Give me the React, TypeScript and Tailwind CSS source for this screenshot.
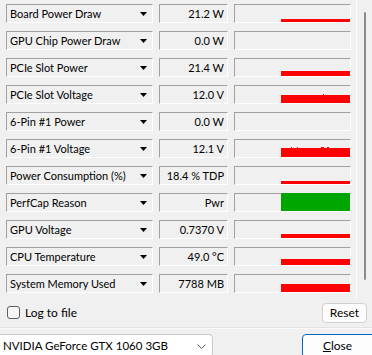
import React from 'react';

type Bump = { x: number; w: number; h: number };

interface SensorRow {
  name: string;
  value: string;
  barHeight: number; // height of the graph fill, px
  color?: string;
  bumps?: Bump[];
}

const rows: SensorRow[] = [
  { name: 'Board Power Draw', value: '21.2 W', barHeight: 3 },
  { name: 'GPU Chip Power Draw', value: '0.0 W', barHeight: 0 },
  { name: 'PCIe Slot Power', value: '21.4 W', barHeight: 5 },
  { name: 'PCIe Slot Voltage', value: '12.0 V', barHeight: 8, bumps: [{ x: 42, w: 1, h: 1 }] },
  { name: '6-Pin #1 Power', value: '0.0 W', barHeight: 0 },
  {
    name: '6-Pin #1 Voltage',
    value: '12.1 V',
    barHeight: 9,
    bumps: [
      { x: 10, w: 1, h: 1 },
      { x: 16, w: 1, h: 1 },
      { x: 40, w: 3, h: 1 },
      { x: 46, w: 2, h: 1 },
    ],
  },
  { name: 'Power Consumption (%)', value: '18.4 % TDP', barHeight: 3 },
  { name: 'PerfCap Reason', value: 'Pwr', barHeight: 18, color: 'bg-[#00a600]' },
  { name: 'GPU Voltage', value: '0.7370 V', barHeight: 4 },
  { name: 'CPU Temperature', value: '49.0 °C', barHeight: 6 },
  { name: 'System Memory Used', value: '7788 MB', barHeight: 8 },
];

// sunken 3D box used by every cell
const cell = 'h-[19px] border-t border-l border-[#a0a0a0] border-b-white border-r-white border-b border-r';

const Row: React.FC<{ row: SensorRow }> = ({ row }) => (
  <div className="flex items-center gap-[6px]">
    <div className={`${cell} w-[147px] flex items-center justify-between pl-[3px] pr-[5px]`}>
      <span className="leading-none whitespace-nowrap">{row.name}</span>
      <svg width="7" height="4" viewBox="0 0 7 4" className="shrink-0">
        <path d="M0 0H7L3.5 4Z" fill="#000" />
      </svg>
    </div>
    <div className={`${cell} w-[69px] flex items-center justify-end pr-[3px]`}>
      <span className="leading-none whitespace-nowrap">{row.value}</span>
    </div>
    <div className={`${cell} w-[117px] relative`}>
      {row.barHeight > 0 && (
        <div
          className={`absolute right-0 bottom-0 w-[69px] ${row.color ?? 'bg-[#ff0000]'}`}
          style={{ height: row.barHeight }}
        />
      )}
      {row.bumps?.map((b, i) => (
        <div
          key={i}
          className="absolute bg-[#ff0000]"
          style={{ left: 46 + b.x, bottom: row.barHeight, width: b.w, height: b.h }}
        />
      ))}
    </div>
  </div>
);

export default function App() {
  return (
    <div
      className="w-[372px] h-[355px] bg-[#f0f0f0] overflow-hidden text-[11px] text-black select-none"
      style={{ fontFamily: 'Lato, "Liberation Sans", sans-serif' }}
    >
      {/* Sensor list with scrollbar */}
      <div className="flex h-[298px]">
        <div className="w-[356px] pl-[6px] pt-[4px] flex flex-col gap-[8px]">
          {rows.map((r) => (
            <Row key={r.name} row={r} />
          ))}
        </div>
        <div className="flex-1 border-l border-[#fbfbfb] pl-[7px] pt-[12px]">
          <div className="w-[2px] h-[268px] bg-[#8a8a8a] rounded-full" />
        </div>
      </div>

      {/* Log to file / Reset */}
      <div className="h-[29px] flex items-center justify-between pl-[7px] pr-[5px]">
        <label className="flex items-center gap-[5px]">
          <span className="w-[13px] h-[13px] rounded-[3px] border border-[#5c5c5c] bg-[#f6f6f6]" />
          <span className="text-[12px]">Log to file</span>
        </label>
        <button className="w-[45px] h-[20px] rounded-[4px] border border-[#d0d0d0] bg-[#fdfdfd] leading-none text-[12px]">
          Reset
        </button>
      </div>

      <div className="h-px bg-[#e2e2e2]" />
      <div className="h-px bg-[#fafafa]" />

      {/* GPU select / Close */}
      <div className="flex items-start justify-between pt-[5px]">
        <div className="-ml-[3px] w-[216px] h-[24px] bg-white border border-[#c9c9c9] rounded-[4px] flex items-center justify-between pl-[5px] pr-[6px]">
          <span className="whitespace-nowrap text-[11.5px]">NVIDIA GeForce GTX 1060 3GB</span>
          <svg width="9" height="5" viewBox="0 0 9 5">
            <path d="M0.5 0.5L4.5 4.5L8.5 0.5" fill="none" stroke="#606060" strokeWidth="1" />
          </svg>
        </div>
        <button className="-mr-[5px] w-[75px] h-[24px] rounded-[4px] border border-[#0067c0] bg-[#fdfdfd] pr-[4px] leading-none text-[12px]">
          <span className="underline">C</span>lose
        </button>
      </div>
    </div>
  );
}
